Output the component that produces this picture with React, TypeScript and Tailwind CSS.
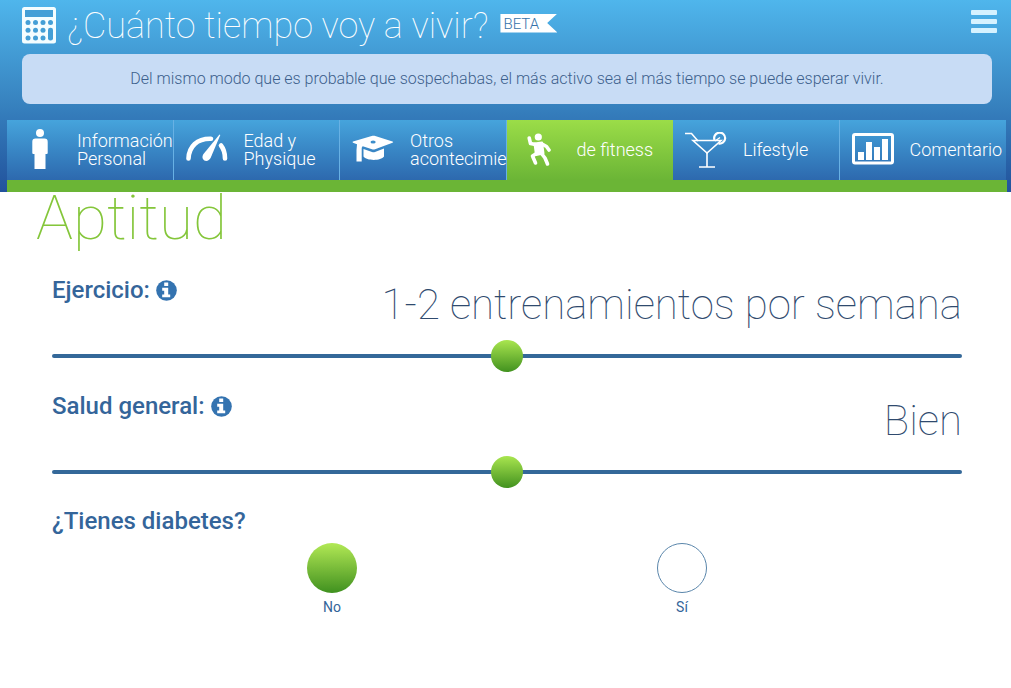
import { useState, type ReactNode } from 'react'

type Tab = {
  label: string
  icon: ReactNode
}

type SliderQuestionProps = {
  id: string
  label: string
  options: string[]
}

function CalculatorIcon() {
  return (
    <svg viewBox="0 0 34 37" className="h-[37px] w-[34px] shrink-0" aria-hidden="true">
      <rect width="34" height="36.500" rx="2.500" fill="#f4fdff" />
      <g fill="#449fd6">
        <rect x="3" y="3" width="28" height="7" />
        {[15.5, 23.3, 31].map((cy) =>
          [6, 13.5, 21].map((cx) => <circle key={`${cx}-${cy}`} cx={cx} cy={cy} r="2.5" />)
        )}
        <circle cx="28.500" cy="15.500" r="2.500" />
        <rect x="26" y="20.800" width="5" height="12.700" rx="2.300" />
      </g>
    </svg>
  )
}

function PersonIcon() {
  return (
    <svg viewBox="0 0 16 40" className="mb-0.5 h-10 w-4" fill="#fff" aria-hidden="true">
      <circle cx="8" cy="4" r="4" />
      <path d="M3.500 9.500h9A3.200 3.200 0 0 1 15.700 12.700V24a1 1 0 0 1-1 1H13.500V40H2.500V25H1.300a1 1 0 0 1-1-1V12.700A3.200 3.200 0 0 1 3.500 9.500z" />
    </svg>
  )
}

function GaugeIcon() {
  return (
    <svg viewBox="0 0 42 28" className="mb-1 h-7 w-[42px]" aria-hidden="true">
      <path d="M2.500 24.500C3 12.500 11 4.300 25 4.700" fill="none" stroke="#fff" strokeWidth="4.600" strokeLinecap="round" />
      <path d="M35 11.500C37.800 15 39 19 39 24.500" fill="none" stroke="#fff" strokeWidth="4.600" strokeLinecap="round" />
      <path d="M33.500.5 34.300 1 24.700 23.700C23.500 26.500 20.500 27.600 18.300 26.400C16 25 16 22 17.500 20z" fill="#fff" />
    </svg>
  )
}

function GraduationIcon() {
  return (
    <svg viewBox="0 0 42 28" className="mb-0.5 h-7 w-[42px]" fill="#fff" aria-hidden="true">
      <path
        fillRule="evenodd"
        d="M1 6.500 20.500.8Q21.500.5 22.500.8L40.500 6.500Q42 7.100 40.500 7.800L23 14.200Q21.500 14.700 20 14.200L10.800 11.200Q9.700 11.800 9.700 13.500V26.500H4.500V15L5 9.300 1 7.700Q0 7.100 1 6.500zM18.500 7A2.600 1.500 0 1 0 23.700 7A2.600 1.500 0 1 0 18.500 7z"
      />
      <path d="M11.500 14 20 17Q21.500 17.400 23 17L32 13.500V21.500C29 26 14.500 26 11.500 21.500z" />
    </svg>
  )
}

function RunnerIcon() {
  return (
    <svg viewBox="0 0 24 34" className="mr-0.5 h-[34px] w-6" aria-hidden="true">
      <circle cx="11.300" cy="4" r="3.600" fill="#fff" />
      <path d="M7.500 10.500 15 9.500 16.500 20.500 9 22z" fill="#fff" stroke="#fff" strokeWidth="2" strokeLinejoin="round" />
      <g fill="none" stroke="#fff" strokeWidth="3.600" strokeLinecap="round" strokeLinejoin="round">
        <path d="M8.500 11.500 3.500 10.500 2.200 5" />
        <path d="M15 11 19.500 13.500 22 17" />
        <path d="M9.500 20.500 5.500 23 8.500 30" />
        <path d="M14.500 20.500 18 25 20.500 31" />
      </g>
    </svg>
  )
}

function CocktailIcon() {
  return (
    <svg viewBox="0 0 42 36" className="h-9 w-[42px]" fill="none" stroke="#fff" strokeWidth="1.600" aria-hidden="true">
      <path d="M0 1.500H6.500L13 9" />
      <path d="M8 8.500H36L22 21z" />
      <path d="M22 20V35M14 35H30" />
      <path d="M29.500 8A5.500 5.500 0 1 1 33.500 11.500" strokeWidth="2.200" />
      <path d="M30 9 35 5.500" strokeWidth="1.400" />
    </svg>
  )
}

function ChartIcon() {
  return (
    <svg viewBox="0 0 42 32" className="mb-0.5 h-8 w-[42px]" fill="#fff" aria-hidden="true">
      <rect x="1.500" y="1.500" width="39" height="28.500" rx="1.500" fill="none" stroke="#fff" strokeWidth="3" />
      <path d="M6 19h6v8H6zM14 9h6v18h-6zM22 14h6v13h-6zM30 6h6v21h-6z" />
    </svg>
  )
}

function InfoIcon() {
  return (
    <svg viewBox="0 0 21 21" className="size-[21px]" aria-hidden="true">
      <circle cx="10.500" cy="10.500" r="10.300" fill="currentColor" />
      <path d="M8.200 2.600h4v3.300h-4zM6.200 7.800h6v6.600h2v2.900H6.200v-2.900h2v-3.700h-2z" fill="#fff" />
    </svg>
  )
}

const tabs: Tab[] = [
  { label: 'Información Personal', icon: <PersonIcon /> },
  { label: 'Edad y Physique', icon: <GaugeIcon /> },
  { label: 'Otros acontecimie', icon: <GraduationIcon /> },
  { label: 'de fitness', icon: <RunnerIcon /> },
  { label: 'Lifestyle', icon: <CocktailIcon /> },
  { label: 'Comentario', icon: <ChartIcon /> },
]

function SliderQuestion({ id, label, options }: SliderQuestionProps) {
  const [value, setValue] = useState(1)

  return (
    <div className="h-[116px]">
      <div className="flex h-[66px] items-start justify-between">
        <div className="flex items-center gap-1.5">
          <label htmlFor={id} className="text-2xl leading-8 font-medium">
            {label}
          </label>
          <button type="button" aria-label={`Información: ${label}`} className="text-[#3473b0]">
            <InfoIcon />
          </button>
        </div>
        <output htmlFor={id} className="pt-[7px] text-[42px] leading-12 font-thin text-[#2f4a6e]">
          {options[value]}
        </output>
      </div>
      <input
        id={id}
        type="range"
        min={0}
        max={options.length - 1}
        value={value}
        onChange={(event) => setValue(Number(event.target.value))}
        className="block h-8 w-full cursor-pointer appearance-none bg-transparent [&::-webkit-slider-runnable-track]:h-1 [&::-webkit-slider-runnable-track]:rounded-full [&::-webkit-slider-runnable-track]:bg-[#346899] [&::-webkit-slider-thumb]:-mt-3.5 [&::-webkit-slider-thumb]:size-8 [&::-webkit-slider-thumb]:appearance-none [&::-webkit-slider-thumb]:rounded-full [&::-webkit-slider-thumb]:bg-linear-to-b [&::-webkit-slider-thumb]:from-[#a9e64f] [&::-webkit-slider-thumb]:to-[#41921f]"
      />
    </div>
  )
}

export default function App() {
  const [activeTab, setActiveTab] = useState('de fitness')
  const [diabetes, setDiabetes] = useState('No')

  return (
    <div className="min-h-screen bg-white font-[Roboto,sans-serif] text-[#34659a]">
      <header className="bg-linear-to-b from-[#4fb6ec] via-[#3986c2] via-50% to-[#22529c] pr-1 pl-[7px]">
        <div className="flex h-[54px] items-center px-[15px] pb-1">
          <CalculatorIcon />
          <h1 className="ml-[11px] pt-0.5 text-4xl leading-[50px] font-thin whitespace-nowrap text-white">¿Cuánto tiempo voy a vivir?</h1>
          <span className="mb-1 ml-3 h-[19px] w-[57px] bg-white pl-[3px] text-[15px] leading-[20px] font-light text-[#3472aa] [clip-path:polygon(0_0,100%_0,82%_50%,100%_100%,0_100%)]">
            BETA
          </span>
          <button type="button" aria-label="Menú" className="-mr-[5px] mb-2 ml-auto grid w-[26px] gap-1">
            <span className="h-[5px] rounded-[1px] bg-[#d5f2ff]" />
            <span className="h-[5px] rounded-[1px] bg-[#d5f2ff]" />
            <span className="h-[5px] rounded-[1px] bg-[#d5f2ff]" />
          </button>
        </div>

        <p className="mx-[15px] rounded-lg bg-[#c8dcf5] text-center text-base leading-[50px] font-light text-[#3c5f8c]">
          Del mismo modo que es probable que sospechabas, el más activo sea el más tiempo se puede esperar vivir.
        </p>

        <nav className="mt-4 grid grid-cols-6 border-b-12 border-[#6bb536] pr-px">
          {tabs.map((tab) => {
            const active = tab.label === activeTab
            return (
              <button
                key={tab.label}
                type="button"
                onClick={() => setActiveTab(tab.label)}
                aria-current={active ? 'page' : undefined}
                className={`flex h-[60px] min-w-0 items-center bg-linear-to-b text-left text-lg leading-[18px] font-light text-white ${
                  active ? 'from-[#9bdd48] to-[#6bb536]' : 'border-r border-[#68b1e4] from-[#46a4dc] to-[#2d69ae] last:border-r-0'
                }`}
              >
                <span className="flex w-[66px] shrink-0 justify-center">{tab.icon}</span>
                <span className="ml-1 min-w-0">{tab.label}</span>
              </button>
            )
          })}
        </nav>
      </header>

      <main className="pr-[49px] pb-10 pl-[52px]">
        <h2 className="-ml-4 text-[62px] leading-[52px] font-thin text-[#84c63a]">Aptitud</h2>

        <form className="mt-[30px]">
          <SliderQuestion
            id="exercise"
            label="Ejercicio:"
            options={['Nunca', '1-2 entrenamientos por semana', '3 o más entrenamientos por semana']}
          />
          <SliderQuestion id="health" label="Salud general:" options={['Mal', 'Bien', 'Excelente']} />

          <fieldset>
            <legend className="text-2xl leading-[30px] font-medium">¿Tienes diabetes?</legend>
            <div className="mx-auto mt-[7px] grid w-10/13 grid-cols-2">
              {['No', 'Sí'].map((option) => (
                <label key={option} className="flex cursor-pointer flex-col items-center gap-1 text-sm leading-5">
                  <input
                    type="radio"
                    name="diabetes"
                    value={option}
                    checked={diabetes === option}
                    onChange={() => setDiabetes(option)}
                    className="size-[50px] appearance-none rounded-full border border-[#5a86ab] bg-white checked:border-0 checked:bg-linear-to-b checked:from-[#b2e955] checked:to-[#3f911f]"
                  />
                  {option}
                </label>
              ))}
            </div>
          </fieldset>
        </form>
      </main>
    </div>
  )
}
